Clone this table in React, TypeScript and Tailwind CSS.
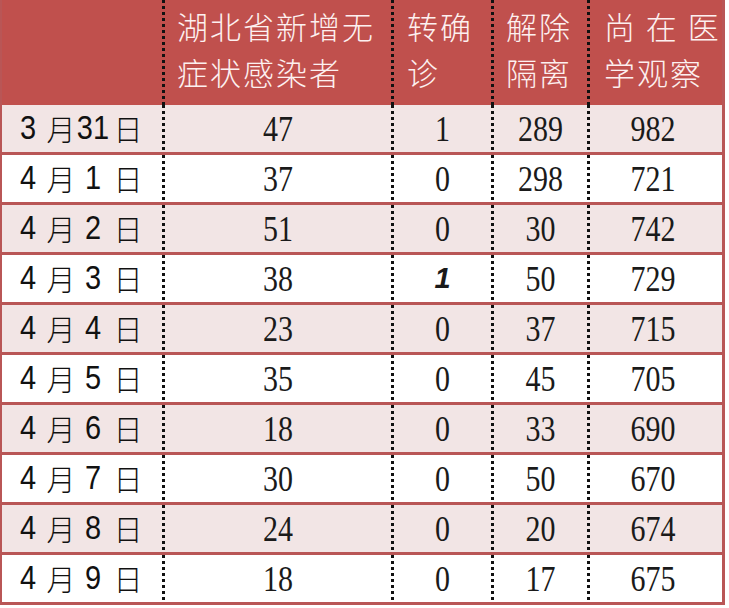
import React from 'react';

type Row = {
  m: string;
  d: string;
  added: number;
  confirmed: number;
  italic?: boolean;
  released: number;
  observed: number;
};

const rows: Row[] = [
  { m: '3', d: '31', added: 47, confirmed: 1, released: 289, observed: 982 },
  { m: '4', d: '1', added: 37, confirmed: 0, released: 298, observed: 721 },
  { m: '4', d: '2', added: 51, confirmed: 0, released: 30, observed: 742 },
  { m: '4', d: '3', added: 38, confirmed: 1, italic: true, released: 50, observed: 729 },
  { m: '4', d: '4', added: 23, confirmed: 0, released: 37, observed: 715 },
  { m: '4', d: '5', added: 35, confirmed: 0, released: 45, observed: 705 },
  { m: '4', d: '6', added: 18, confirmed: 0, released: 33, observed: 690 },
  { m: '4', d: '7', added: 30, confirmed: 0, released: 50, observed: 670 },
  { m: '4', d: '8', added: 24, confirmed: 0, released: 20, observed: 674 },
  { m: '4', d: '9', added: 18, confirmed: 0, released: 17, observed: 675 },
];

// dotted column rule, drawn on the left edge of every cell after the first
const dots =
  'bg-[image:repeating-linear-gradient(to_bottom,#111_0_3px,transparent_3px_6px)] bg-[length:3px_100%] bg-no-repeat bg-left';

const grid = 'grid grid-cols-[160px_229px_100px_96px_135px]';

const Num: React.FC<{ children: React.ReactNode }> = ({ children }) => (
  <span className="inline-block scale-y-[1.2] font-['Liberation_Serif',serif] text-[30px] leading-none text-[#1a1a1a]">
    {children}
  </span>
);

const Digit: React.FC<{ children: React.ReactNode; className: string }> = ({ children, className }) => (
  <span
    className={`${className} inline-block shrink-0 scale-y-[1.12] text-center font-['Liberation_Sans',sans-serif] text-[29px] leading-none`}
  >
    {children}
  </span>
);

const App: React.FC = () => {
  return (
    <div className="min-h-screen w-[729px] bg-white">
      <div className="w-[725px] border-l-2 border-r-[3px] border-[#b95656]">
        {/* header */}
        <div
          className={`${grid} h-[105px] bg-[#c0504d] pb-[8px] font-['Noto_Sans_CJK_SC',sans-serif] text-[31px] font-light leading-[46px] tracking-[2px] text-[#fdf0f0]`}
        >
          <div />
          <div className={`${dots} -mb-[8px] flex items-center pb-[8px] pl-[15px]`}>
            <div>
              湖北省新增无
              <br />
              症状感染者
            </div>
          </div>
          <div className={`${dots} -mb-[8px] flex items-center pb-[8px] pl-[16px]`}>
            <div>
              转确
              <br />
              诊
            </div>
          </div>
          <div className={`${dots} -mb-[8px] flex items-center pb-[8px] pl-[15px]`}>
            <div>
              解除
              <br />
              隔离
            </div>
          </div>
          <div className={`${dots} -mb-[8px] flex items-center pb-[8px] pl-[17px]`}>
            <div>
              尚&nbsp;在&nbsp;医
              <br />
              学观察
            </div>
          </div>
        </div>

        {/* body */}
        {rows.map((r, i) => (
          <div
            key={i}
            className={`${grid} h-[50px] border-b-[3px] border-[#b95656] ${i % 2 === 0 ? 'bg-[#f2e5e5]' : 'bg-white'}`}
          >
            <div className="flex items-center pl-[10px] leading-none text-[#111]">
              <Digit className="w-[32px]">{r.m}</Digit>
              <span className="ml-[2px] w-[30px] shrink-0 text-center font-['Noto_Sans_CJK_SC',sans-serif] text-[29px] font-light">
                月
              </span>
              <Digit className="w-[34px]">{r.d}</Digit>
              <span className="ml-[3px] w-[30px] shrink-0 text-center font-['Noto_Sans_CJK_SC',sans-serif] text-[29px] font-light">
                日
              </span>
            </div>
            <div className={`${dots} flex items-center justify-center pl-[3px]`}>
              <Num>{r.added}</Num>
            </div>
            <div className={`${dots} flex items-center justify-center pl-[3px]`}>
              {r.italic ? (
                <span className="font-['Liberation_Sans',sans-serif] text-[29px] font-bold italic leading-none text-[#1a1a1a]">
                  {r.confirmed}
                </span>
              ) : (
                <Num>{r.confirmed}</Num>
              )}
            </div>
            <div className={`${dots} flex items-center justify-center pl-[3px]`}>
              <Num>{r.released}</Num>
            </div>
            <div className={`${dots} flex items-center justify-center pl-[3px] pr-[6px]`}>
              <Num>{r.observed}</Num>
            </div>
          </div>
        ))}
      </div>
    </div>
  );
};

export default App;
